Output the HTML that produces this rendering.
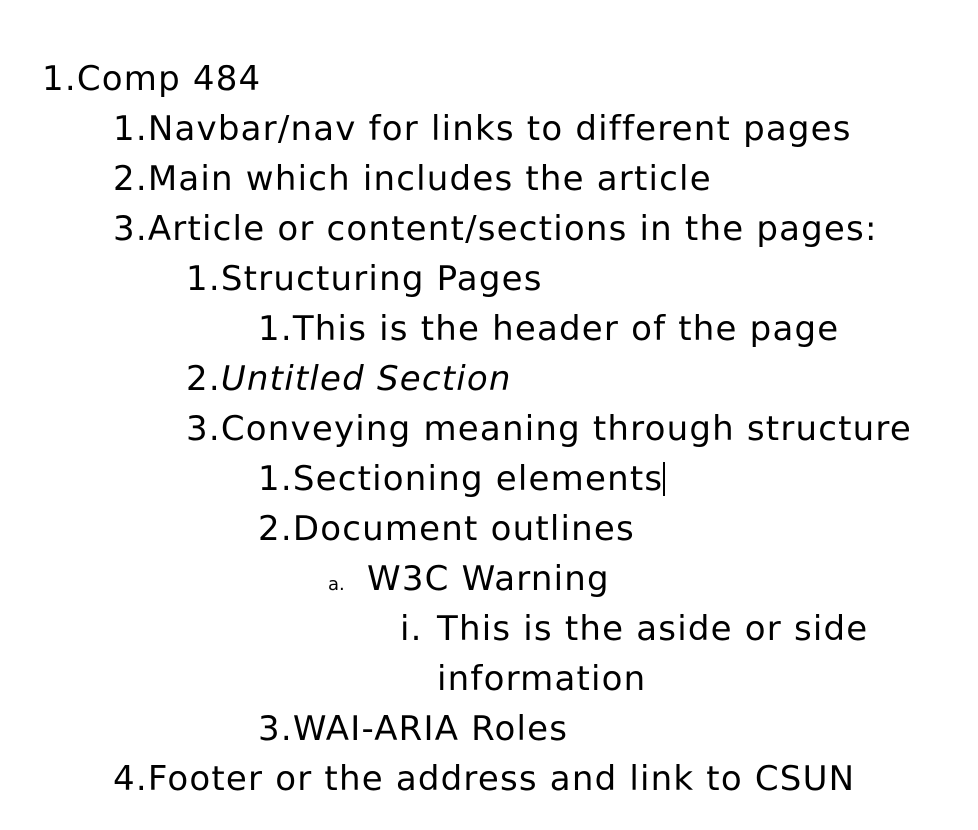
<!DOCTYPE html>
<html><head><meta charset="utf-8"><style>
body{margin:0;width:978px;height:830px;background:#fff;position:relative;overflow:hidden;font-family:"DejaVu Sans","Liberation Sans",sans-serif;font-size:34px;letter-spacing:1.2px;color:#000}
.l{position:absolute;white-space:nowrap;line-height:50px}
</style></head><body>
<div class="l" style="left:42px;top:54px">1.Comp 484</div>
<div class="l" style="left:113px;top:104px">1.Navbar/nav for links to different pages</div>
<div class="l" style="left:113px;top:154px">2.Main which includes the article</div>
<div class="l" style="left:113px;top:204px">3.Article or content/sections in the pages:</div>
<div class="l" style="left:186px;top:254px">1.Structuring Pages</div>
<div class="l" style="left:258px;top:304px">1.This is the header of the page</div>
<div class="l" style="left:186px;top:354px">2.<i>Untitled Section</i></div>
<div class="l" style="left:186px;top:404px">3.Conveying meaning through structure</div>
<div class="l" style="left:258px;top:454px">1.Sectioning elements<span style="display:inline-block;width:2px;height:34px;background:#000;vertical-align:-6px"></span></div>
<div class="l" style="left:258px;top:504px">2.Document outlines</div>
<div class="l" style="left:328px;top:554px"><span style="font-size:18px;letter-spacing:0">a.</span></div>
<div class="l" style="left:367px;top:554px">W3C Warning</div>
<div class="l" style="left:400px;top:604px">i.</div>
<div class="l" style="left:437px;top:604px">This is the aside or side</div>
<div class="l" style="left:437px;top:654px">information</div>
<div class="l" style="left:258px;top:704px">3.WAI-ARIA Roles</div>
<div class="l" style="left:113px;top:754px">4.Footer or the address and link to CSUN</div>
</body></html>
